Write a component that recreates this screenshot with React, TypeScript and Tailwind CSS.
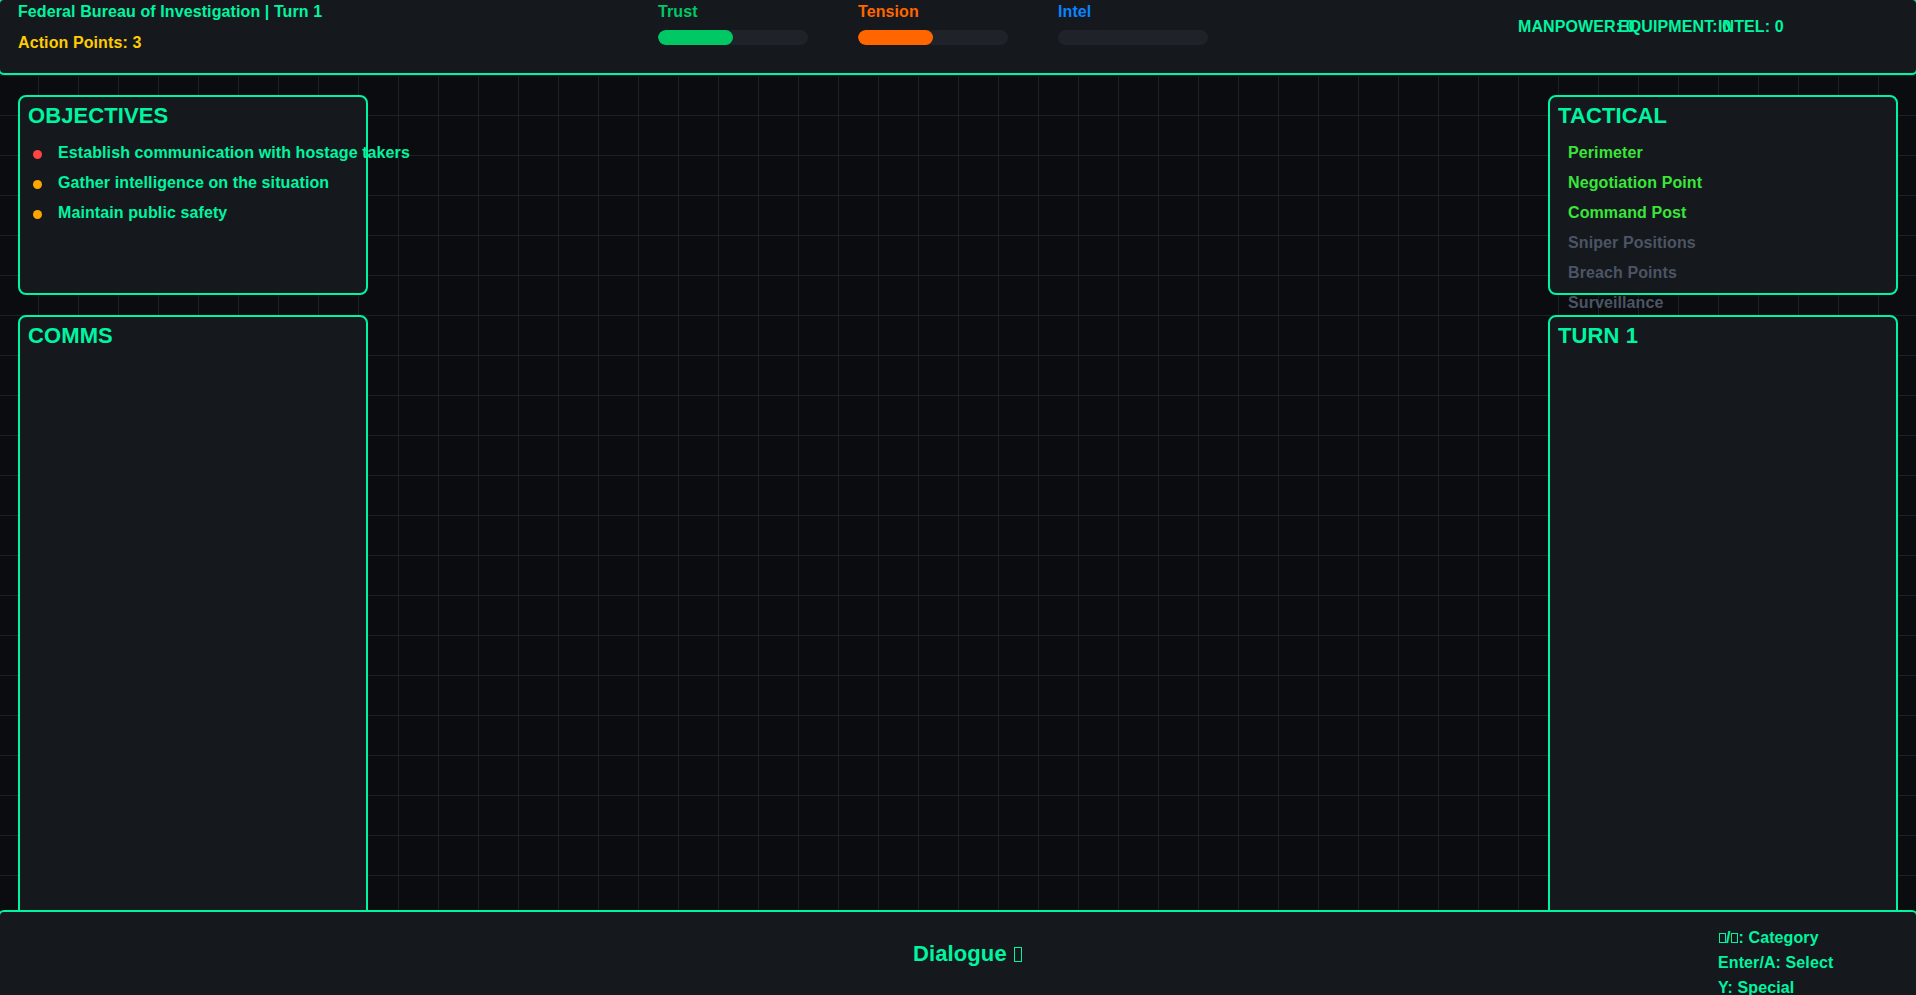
import React from "react";

const FONT = "font-['Liberation_Sans',Arial,sans-serif]";

const METERS = [
  { label: "Trust", value: 50, text: "text-[#00c864]", fill: "bg-[#00c864]" },
  { label: "Tension", value: 50, text: "text-[#ff6600]", fill: "bg-[#ff6600]" },
  { label: "Intel", value: 0, text: "text-[#0a84ff]", fill: "bg-[#0a84ff]" },
];

const STATS = ["MANPOWER: 0", "EQUIPMENT: 0", "INTEL: 0"];

const OBJECTIVES = [
  { text: "Establish communication with hostage takers", dot: "bg-[#ff4444]" },
  { text: "Gather intelligence on the situation", dot: "bg-[#ffa500]" },
  { text: "Maintain public safety", dot: "bg-[#ffa500]" },
];

const TACTICAL = [
  { label: "Perimeter", active: true },
  { label: "Negotiation Point", active: true },
  { label: "Command Post", active: true },
  { label: "Sniper Positions", active: false },
  { label: "Breach Points", active: false },
  { label: "Surveillance", active: false },
];

// missing-glyph box, as the browser drew it in the capture
function Tofu({ big = false }: { big?: boolean }) {
  return (
    <span
      className={
        big
          ? "inline-block w-[8px] h-[15px] border border-current align-[-1px] mx-[1px]"
          : "inline-block w-[7px] h-[10px] border border-current align-[0px] mx-[0.5px]"
      }
    />
  );
}

function Panel({ title, className, children }: { title: string; className: string; children?: React.ReactNode }) {
  return (
    <section className={`flex-none rounded-[8px] border-2 border-[#00f5a0] bg-[#15181d] p-2 ${className}`}>
      <h2 className="text-[22px] leading-[22px] font-bold text-[#00f5a0]">{title}</h2>
      {children}
    </section>
  );
}

export default function App() {
  return (
    <div
      className={`${FONT} relative flex h-[995px] w-full flex-col overflow-hidden bg-[#0b0c0f] bg-[linear-gradient(to_right,#1c2129_1px,transparent_1px),linear-gradient(to_bottom,#1c2129_1px,transparent_1px)] bg-size-[40px_40px] bg-position-[38px_35px] tracking-[0.1px]`}
    >
      {/* top bar */}
      <header className="relative z-10 -mx-[2px] -mt-[2px] flex h-[77px] flex-none rounded-[6px] border-2 border-[#00f5a0] bg-[#15181d] pl-[18px]">
        <div className="w-[640px] flex-none">
          <div className="text-[16px] leading-6 font-bold text-[#00f5a0]">Federal Bureau of Investigation | Turn 1</div>
          <div className="mt-[7px] text-[16px] leading-6 font-bold text-[#ffcc00]">Action Points: 3</div>
        </div>

        <div className="flex flex-none gap-[50px]">
          {METERS.map((m) => (
            <div key={m.label} className="w-[150px]">
              <div className={`text-[16px] leading-6 font-bold ${m.text}`}>{m.label}</div>
              <div className="mt-[6px] h-[15px] w-full overflow-hidden rounded-full bg-[#1f2228]">
                <div className={`h-full rounded-full ${m.fill}`} style={{ width: `${m.value}%` }} />
              </div>
            </div>
          ))}
        </div>

        <div className="ml-[310px] flex pt-[15px]">
          {STATS.map((s) => (
            <span key={s} className="w-[100px] flex-none whitespace-nowrap text-[16px] leading-6 font-bold text-[#00f5a0]">
              {s}
            </span>
          ))}
        </div>
      </header>

      {/* board */}
      <main className="flex h-[835px] flex-none justify-between overflow-hidden px-[18px] pt-5">
        <div className="flex w-[350px] flex-col gap-5">
          <Panel title="OBJECTIVES" className="h-[200px]">
            <ul className="mt-[14px] flex flex-col gap-[6px]">
              {OBJECTIVES.map((o) => (
                <li key={o.text} className="flex items-center whitespace-nowrap text-[16px] leading-6 font-bold text-[#00f5a0]">
                  <span className={`ml-[5px] mr-[16px] mt-[3px] h-[9px] w-[9px] flex-none rounded-full ${o.dot}`} />
                  {o.text}
                </li>
              ))}
            </ul>
          </Panel>
          <Panel title="COMMS" className="h-[700px]" />
        </div>

        <div className="flex w-[350px] flex-col gap-5">
          <Panel title="TACTICAL" className="h-[200px]">
            <ul className="mt-[14px] flex flex-col gap-[6px] pl-[10px]">
              {TACTICAL.map((t) => (
                <li
                  key={t.label}
                  className={`whitespace-nowrap text-[16px] leading-6 font-bold ${t.active ? "text-[#39e639]" : "text-[#4b5563]"}`}
                >
                  {t.label}
                </li>
              ))}
            </ul>
          </Panel>
          <Panel title="TURN 1" className="h-[700px]" />
        </div>
      </main>

      {/* action bar */}
      <footer className="relative z-10 -mx-[2px] grid h-[120px] flex-none grid-cols-[1fr_auto_1fr] rounded-[6px] border-2 border-[#00f5a0] bg-[#15181d]">
        <div />
        <div className="pl-5 pt-[31px] text-[22px] leading-[22px] font-bold text-[#00f5a0]">
          Dialogue <Tofu big />
        </div>
        <div className="flex justify-end pr-[18px] pt-[13px]">
          <div className="w-[180px] text-[16px] leading-[25px] font-bold text-[#00f5a0]">
            <div>
              <Tofu />/<Tofu />: Category
            </div>
            <div>Enter/A: Select</div>
            <div>Y: Special</div>
          </div>
        </div>
      </footer>
    </div>
  );
}
